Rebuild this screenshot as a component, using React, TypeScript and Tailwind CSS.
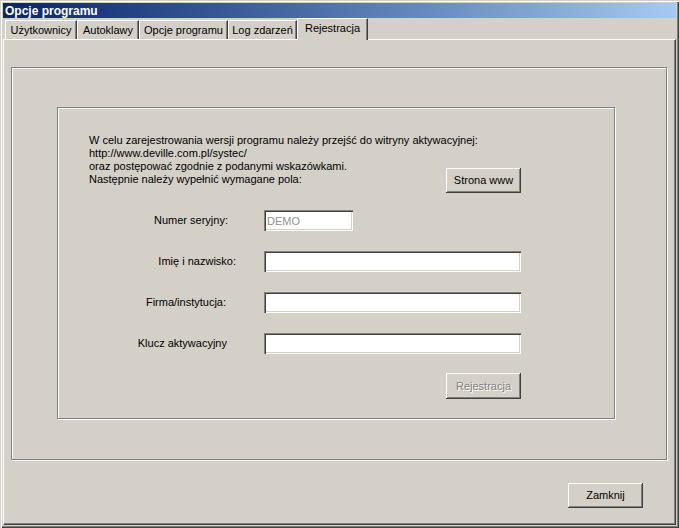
import React from "react";

const tabs = [
  { label: "Użytkownicy", w: "w-[72px]" },
  { label: "Autoklawy", w: "w-[62px]" },
  { label: "Opcje programu", w: "w-[89px]" },
  { label: "Log zdarzeń", w: "w-[69px]" },
];

const raised =
  "shadow-[inset_-1px_-1px_0_#404040,inset_1px_1px_0_#fff,inset_-2px_-2px_0_#808080,inset_2px_2px_0_#d4d0c8]";
const sunken =
  "shadow-[inset_1px_1px_0_#808080,inset_2px_2px_0_#404040,inset_-1px_-1px_0_#fff,inset_-2px_-2px_0_#d4d0c8]";
const etched = "border border-[#808080] shadow-[1px_1px_0_#fff,inset_1px_1px_0_#fff]";

function Field({ label, pr, wide = true, value }: { label: string; pr: string; wide?: boolean; value?: string }) {
  return (
    <div className="flex items-center h-[21px]">
      <div className={`w-[147px] text-right ${pr}`}>{label}</div>
      <input
        readOnly={value !== undefined}
        defaultValue={value}
        className={`ml-[28px] h-[21px] ${wide ? "w-[257px]" : "w-[89px]"} bg-white pl-[3px] text-[11px] text-[#8f8f8f] outline-none ${sunken}`}
      />
    </div>
  );
}

export default function App() {
  return (
    <div className="w-[679px] h-[528px] bg-[#d4d0c8] flex flex-col p-[3px] overflow-hidden font-['Liberation_Sans',Arial,sans-serif] text-[11px] leading-[13px] text-black shadow-[inset_1px_1px_0_#d4d0c8,inset_2px_2px_0_#fff,inset_-1px_-1px_0_#404040,inset_-2px_-2px_0_#808080]">
      {/* Title bar */}
      <div className="h-[15px] flex items-center pl-[2px] bg-linear-to-r from-[#0a246a] to-[#a6caf0] text-white font-bold text-[12px] leading-none">
        Opcje programu
      </div>

      {/* Tabs */}
      <div className="h-[21px] flex items-end pl-[2px]">
        {tabs.map((t) => (
          <div
            key={t.label}
            className={`${t.w} h-[19px] flex justify-center pt-[3px] border-l border-t border-white border-r border-r-[#404040] shadow-[inset_-1px_0_0_#808080] whitespace-nowrap`}
          >
            {t.label}
          </div>
        ))}
        <div className="w-[71px] h-[22px] -mb-px relative z-10 bg-[#d4d0c8] flex justify-center pt-[3px] border-l border-t border-white border-r border-r-[#404040] shadow-[inset_-1px_0_0_#808080] whitespace-nowrap">
          Rejestracja
        </div>
      </div>

      {/* Panel */}
      <div className="flex-1 flex flex-col border-l border-t border-white border-r border-b border-r-[#404040] border-b-[#404040] shadow-[inset_-1px_-1px_0_#808080]">
        <div className={`ml-[7px] mt-[27px] w-[656px] h-[393px] ${etched}`}>
          <div className={`ml-[45px] mt-[39px] w-[558px] h-[312px] pl-[31px] pt-[26px] flex flex-col ${etched}`}>
            <div className="flex items-start">
              <div className="w-[357px] whitespace-nowrap">
                <div>W celu zarejestrowania wersji programu należy przejść do witryny aktywacyjnej:</div>
                <div>http://www.deville.com.pl/systec/</div>
                <div>oraz postępować zgodnie z podanymi wskazówkami.</div>
                <div>Następnie należy wypełnić wymagane pola:</div>
              </div>
              <button className={`mt-[34px] w-[75px] h-[25px] flex items-center justify-center ${raised}`}>
                Strona www
              </button>
            </div>

            <div className="mt-[17px] flex flex-col gap-[20px]">
              <Field label="Numer seryjny:" pr="pr-[8px]" wide={false} value="DEMO" />
              <Field label="Imię i nazwisko:" pr="pr-0" />
              <Field label="Firma/instytucja:" pr="pr-[10px]" />
              <Field label="Klucz aktywacyjny" pr="pr-[9px]" />
            </div>

            <button
              className={`ml-[357px] mt-[19px] w-[75px] h-[26px] flex items-center justify-center text-[#808080] [text-shadow:1px_1px_0_#fff] ${raised}`}
            >
              Rejestracja
            </button>
          </div>
        </div>

        <button className={`self-end mr-[32px] mt-[23px] w-[75px] h-[25px] flex items-center justify-center ${raised}`}>
          Zamknij
        </button>
      </div>
    </div>
  );
}
